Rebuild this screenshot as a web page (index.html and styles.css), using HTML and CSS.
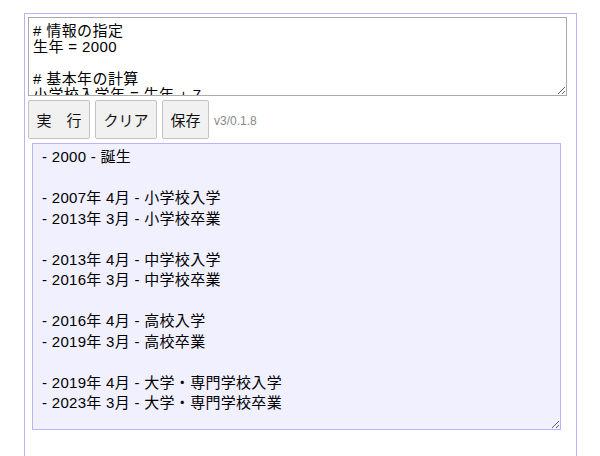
FILE: index.html
```html
<!DOCTYPE html>
<html lang="ja">
<head>
<meta charset="utf-8">
<link rel="stylesheet" href="styles.css">
</head>
<body>
<div class="app">
<textarea class="source" spellcheck="false"># 情報の指定
生年 = 2000

# 基本年の計算
小学校入学年 = 生年 + 7
中学校入学年 = 小学校入学年 + 6</textarea>
<div class="toolbar">
<button class="btn">実　行</button>
<button class="btn">クリア</button>
<button class="btn">保存</button>
<span class="version">v3/0.1.8</span>
</div>
<textarea class="result" readonly spellcheck="false">- 2000 - 誕生

- 2007年 4月 - 小学校入学
- 2013年 3月 - 小学校卒業

- 2013年 4月 - 中学校入学
- 2016年 3月 - 中学校卒業

- 2016年 4月 - 高校入学
- 2019年 3月 - 高校卒業

- 2019年 4月 - 大学・専門学校入学
- 2023年 3月 - 大学・専門学校卒業</textarea>
</div>
</body>
</html>
```
FILE: styles.css
```css
html, body {
  margin: 0;
  padding: 0;
  background: #ffffff;
}
body {
  padding: 13px 0 0 24px;
  font-family: "Liberation Sans", "Noto Sans CJK JP", sans-serif;
  color: #000;
  overflow: hidden;
}
.app {
  box-sizing: border-box;
  width: 553px;
  min-height: 460px;
  border: 1px solid #b4b4ff;
  padding: 3px 9px 0 3px;
}
.source {
  display: block;
  box-sizing: border-box;
  margin: 0;
  width: 539px;
  height: 79px;
  border: 1px solid #a9a9a9;
  padding: 5px 4px 4px;
  font-family: "Liberation Sans", "Noto Sans CJK JP", sans-serif;
  font-size: 15px;
  line-height: 16px;
  letter-spacing: 0.4px;
  color: #000;
  resize: vertical;
  scrollbar-width: none;
}
.toolbar {
  display: flex;
  align-items: center;
  gap: 5px;
  margin-top: 4px;
}
.btn {
  box-sizing: border-box;
  height: 39px;
  padding: 0 7.5px;
  border: 1px solid #c4c4c4;
  border-radius: 2px;
  background: #f1f1f1;
  font-family: "Liberation Sans", "Noto Sans CJK JP", sans-serif;
  font-size: 15px;
  color: #111;
}
.version {
  font-size: 12px;
  color: #888;
  margin-left: 0;
  padding-top: 2px;
}
.result {
  display: block;
  box-sizing: border-box;
  margin: 4px 0 0 4px;
  width: 529px;
  height: 287px;
  border: 1px solid #b4b4ff;
  background: #f0f0ff;
  padding: 3px 9px;
  font-family: "Liberation Sans", "Noto Sans CJK JP", sans-serif;
  font-size: 15px;
  line-height: 20.5px;
  letter-spacing: 0.3px;
  color: #000;
  resize: vertical;
  outline: none;
  scrollbar-width: none;
}
```
